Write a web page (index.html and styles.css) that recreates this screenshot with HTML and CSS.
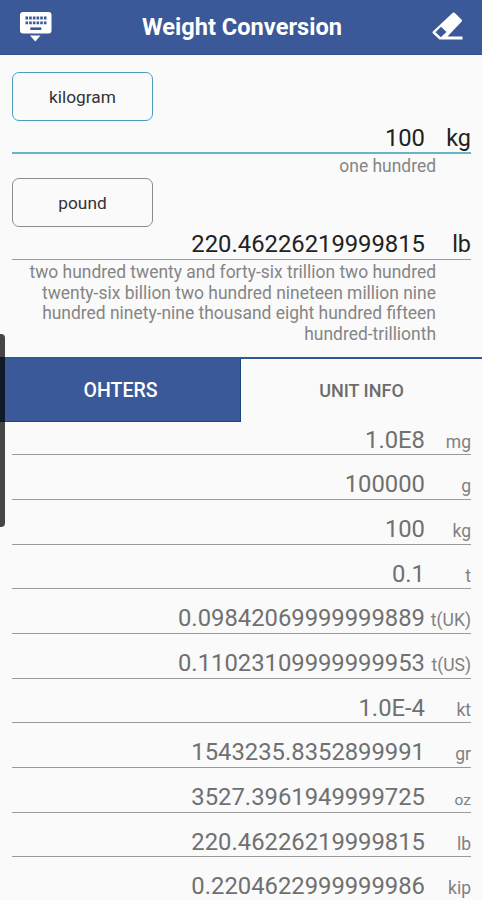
FILE: index.html
```html
<!DOCTYPE html>
<html lang="en">
<head>
<meta charset="utf-8">
<title>Weight Conversion</title>
<link rel="stylesheet" href="styles.css">
</head>
<body>
<header class="bar">
  <svg class="keyboard" width="32" height="32" viewBox="0 0 32 32" aria-hidden="true">
    <rect x="0" y="1" width="31.500" height="21.500" rx="3" fill="#fff"/>
    <path d="M10 24.500h10.500l-5.200 6z" fill="#fff"/>
    <path d="M5.500 7h21M5.500 11.800h21" stroke="#3b5998" stroke-width="2.800" stroke-dasharray="2.600 1.080" fill="none"/>
    <path d="M10.300 17.700h11" stroke="#3b5998" stroke-width="2.600"/>
  </svg>
  <h1 class="title">Weight Conversion</h1>
  <svg class="eraser" width="32" height="30" viewBox="0 0 32 30" aria-hidden="true">
    <path fill="#fff" fill-rule="evenodd" d="M20.800 .8q.9-.8 1.800 0l7.100 7q.9.9 0 1.800L15.500 24.500H30.500v3H7.500L.8 21.200q-.8-.9 0-1.800zM9 14.800 3.500 20.300l5.300 5 5.700-5.200z"/>
  </svg>
</header>
<main>
  <section class="entry active">
    <button class="unit-button">kilogram</button>
    <div class="field"><span class="value">100</span><span class="unit">kg</span></div>
    <p class="words">one hundred</p>
  </section>
  <section class="entry result">
    <button class="unit-button">pound</button>
    <div class="field"><span class="value">220.46226219999815</span><span class="unit">lb</span></div>
    <p class="words">two hundred twenty and forty-six trillion two hundred<br>twenty-six billion two hundred nineteen million nine<br>hundred ninety-nine thousand eight hundred fifteen<br>hundred-trillionth</p>
  </section>
  <nav class="tabs">
    <a class="tab selected">OHTERS</a>
    <a class="tab">UNIT INFO</a>
  </nav>
  <section class="list">
    <div class="row"><span class="value">1.0E8</span><span class="unit">mg</span></div>
    <div class="row"><span class="value">100000</span><span class="unit">g</span></div>
    <div class="row"><span class="value">100</span><span class="unit">kg</span></div>
    <div class="row"><span class="value">0.1</span><span class="unit">t</span></div>
    <div class="row"><span class="value">0.09842069999999889</span><span class="unit">t(UK)</span></div>
    <div class="row"><span class="value">0.11023109999999953</span><span class="unit">t(US)</span></div>
    <div class="row"><span class="value">1.0E-4</span><span class="unit">kt</span></div>
    <div class="row"><span class="value">1543235.8352899991</span><span class="unit">gr</span></div>
    <div class="row"><span class="value">3527.3961949999725</span><span class="unit small">oz</span></div>
    <div class="row"><span class="value">220.46226219999815</span><span class="unit">lb</span></div>
    <div class="row"><span class="value">0.2204622999999986</span><span class="unit">kip</span></div>
  </section>
</main>
<div class="edge-handle"></div>
</body>
</html>
```
FILE: styles.css
```css
* { box-sizing: border-box; }
body {
  margin: 0;
  height: 900px;
  overflow: hidden;
  position: relative;
  background: #fafafa;
  font-family: Roboto, "Liberation Sans", sans-serif;
  color: #222;
}
.bar {
  height: 55px;
  padding: 0 18px 0 20px;
  display: flex;
  align-items: center;
  justify-content: space-between;
  background: #3b5998;
  border-bottom: 1px solid #315191;
}
.title { margin: 0; font-size: 23.6px; line-height: 28px; font-weight: 700; color: #fff; }
.eraser { margin-top: -1px; }
.entry { padding: 0 11px 0 12px; }
.active { padding-top: 17px; height: 123px; }
.result { height: 179px; }
.unit-button {
  display: block;
  width: 141px;
  height: 49px;
  padding: 0;
  border: 1px solid #8c8c8c;
  border-radius: 7px;
  background: transparent;
  font: 17.3px/24px Roboto, "Liberation Sans", sans-serif;
  color: #333;
}
.active .unit-button { border-color: #4d9fb8; }
.field, .row {
  display: flex;
  align-items: baseline;
  justify-content: flex-end;
  border-bottom: 1px solid #999;
}
.field { height: 33px; padding-top: 3px; line-height: 28px; font-size: 23.4px; }
.active .field { border-bottom: 2px solid #69b4c6; }
.value { font-size: 23.8px; }
.unit { width: 46px; text-align: right; white-space: nowrap; }
.words {
  margin: 2px 35px 0 0;
  font-size: 17.45px;
  line-height: 20.7px;
  text-align: right;
  white-space: nowrap;
  color: #858585;
}
.tabs {
  height: 65px;
  display: grid;
  grid-template-columns: 1fr 1fr;
  border-top: 2px solid #2f5899;
}
.tab {
  display: flex;
  align-items: center;
  justify-content: center;
  font-size: 18px;
  font-weight: 500;
  color: #6c6c6c;
}
.selected { padding-top: 1px; padding-left: 1px; font-size: 19.5px; background: #3b5998; color: #fff; border-bottom: 1px solid #174781; border-right: 1px solid #174781; }
.list { padding: 0 11px 0 12px; }
.row { height: 44.67px; padding-top: 15px; line-height: 28px; color: #707070; }
.row:first-child { height: 33.4px; padding-top: 4px; }
.row .unit { font-size: 17.5px; color: #808080; }
.row .small { font-size: 15.5px; }
.edge-handle {
  position: absolute;
  left: 0;
  top: 334px;
  width: 5px;
  height: 193px;
  border-radius: 0 4px 4px 0;
  background: rgba(0, 0, 0, .72);
}
```
